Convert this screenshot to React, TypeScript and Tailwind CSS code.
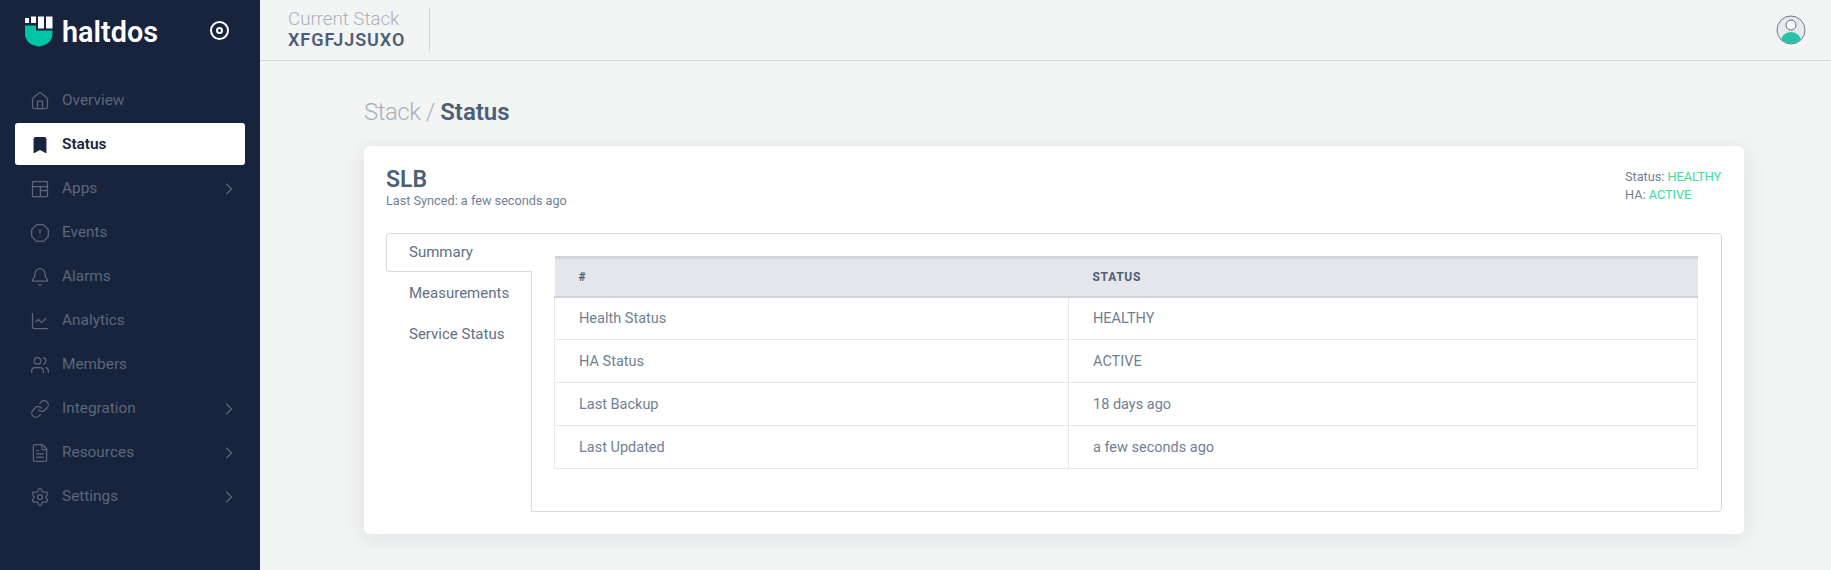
import React from "react";
import { House, Bookmark, OctagonAlert, Bell, ChartLine, Users, Link, FileText, Settings, ChevronRight } from "lucide-react";

function LayoutIcon({ size = 20, strokeWidth = 1.5, className = "" }: { size?: number; strokeWidth?: number; className?: string; fill?: string }) {
  return (
    <svg width={size} height={size} viewBox="0 0 24 24" fill="none" stroke="currentColor" strokeWidth={strokeWidth} className={className}>
      <rect x="3" y="3" width="18" height="18" rx="1" />
      <path d="M3 9h18M12.5 9v12M12.5 14H21" />
    </svg>
  );
}

const nav = [
  { label: "Overview", Icon: House },
  { label: "Status", Icon: Bookmark, active: true },
  { label: "Apps", Icon: LayoutIcon, more: true },
  { label: "Events", Icon: OctagonAlert },
  { label: "Alarms", Icon: Bell },
  { label: "Analytics", Icon: ChartLine },
  { label: "Members", Icon: Users },
  { label: "Integration", Icon: Link, more: true },
  { label: "Resources", Icon: FileText, more: true },
  { label: "Settings", Icon: Settings, more: true },
];

const rows = [
  ["Health Status", "HEALTHY"],
  ["HA Status", "ACTIVE"],
  ["Last Backup", "18 days ago"],
  ["Last Updated", "a few seconds ago"],
];

function Logo() {
  return (
    <svg width="30" height="31" viewBox="0 0 30 31" className="mt-[2px]">
      <rect x="0" y="2" width="4" height="5" fill="#fff" />
      <rect x="6" y="0.5" width="5" height="6.5" fill="#fff" />
      <rect x="13" y="0.5" width="6" height="12" fill="#fff" />
      <rect x="21" y="0.5" width="6.5" height="12" fill="#fff" />
      <path d="M0 9.5h11v5h16.5v3.5C27.5 25 21 30 13.8 30.5 6.5 30 0 25 0 18z" fill="#00c4a7" />
    </svg>
  );
}

function Avatar() {
  return (
    <svg width="30" height="30" viewBox="0 0 30 30">
      <defs>
        <clipPath id="avatar-clip"><circle cx="15" cy="15" r="13.5" /></clipPath>
      </defs>
      <circle cx="15" cy="15" r="14" fill="#e6e9ed" stroke="#6f7a8e" strokeWidth="1" />
      <g clipPath="url(#avatar-clip)">
        <ellipse cx="15" cy="27.5" rx="10.5" ry="10.5" fill="#27c2a6" />
      </g>
      <circle cx="15" cy="10" r="5" fill="#fff" stroke="#5d6a80" strokeWidth="1" />
    </svg>
  );
}

export default function App() {
  return (
    <div className="flex h-[570px] w-full overflow-hidden bg-[#f3f4f4] font-['Roboto',sans-serif]">
      <aside className="w-[260px] shrink-0 bg-[#18233d]">
        <div className="flex h-[60px] items-center pl-[25px] pr-[31px]">
          <Logo />
          <span className="ml-[7px] mt-[4px] text-[28.8px] font-semibold leading-none text-white">haltdos</span>
          <span className="ml-auto flex h-[19px] w-[19px] items-center justify-center rounded-full border-2 border-white">
            <span className="h-[7px] w-[7px] rounded-full border-2 border-white" />
          </span>
        </div>
        <nav className="mt-[19px] flex flex-col gap-[2px] pl-[15px] pr-[15px]">
          {nav.map(({ label, Icon, active, more }) => (
            <div
              key={label}
              className={`flex h-[42px] items-center rounded-[3px] pl-[15px] pr-[6px] pt-[2px] ${active ? "bg-white text-[#18233d]" : "text-[#5c677b]"}`}
            >
              <Icon size={20} strokeWidth={1.5} fill={active ? "#18233d" : "none"} className="shrink-0" />
              <span className={`ml-[12px] text-[15.4px] ${active ? "font-semibold" : "font-normal"}`}>{label}</span>
              {more && <ChevronRight size={20} strokeWidth={1.4} className="ml-auto" />}
            </div>
          ))}
        </nav>
      </aside>
      <main className="flex min-w-0 flex-1 flex-col">
        <header className="flex h-[61px] shrink-0 items-center border-b border-[#d4d6dc] pl-[28px] pr-[25px]">
          <div className="flex h-[44px] flex-col justify-center border-r border-[#d4d6dc] pb-[1px] pr-[24px]">
            <span className="text-[18.7px] font-light leading-[20px] text-[#aab0ba]">Current Stack</span>
            <span className="text-[18px] font-semibold leading-[22px] tracking-[0.95px] text-[#4d5e78]">XFGFJJSUXO</span>
          </div>
          <div className="ml-auto"><Avatar /></div>
        </header>
        <div className="pl-[104px] pr-[87px]">
          <h1 className="mt-[36px] h-[49px] text-[24px] font-light leading-[30px] text-[#aab0ba]">
            <span className="tracking-[-0.5px]">Stack / </span><span className="font-semibold text-[#4d5e78]">Status</span>
          </h1>
          <section className="h-[388px] rounded-[6px] bg-white px-[22px] pt-[21px] shadow-[0_4px_24px_rgba(40,50,70,0.1)]">
            <div className="flex h-[66px] items-start justify-between">
              <div>
                <div className="text-[23px] font-semibold leading-[26px] text-[#4d5e78]">SLB</div>
                <div className="text-[12.7px] leading-[16px] text-[#6f7f94]">Last Synced: a few seconds ago</div>
              </div>
              <div className="w-[97px] pt-[1px] text-[12.7px] leading-[18px] text-[#6f7f94]">
                <div className="whitespace-nowrap">Status: <span className="text-[#34e095]">HEALTHY</span></div>
                <div>HA: <span className="text-[#34e095]">ACTIVE</span></div>
              </div>
            </div>
            <div className="flex h-[279px] items-start">
              <div className="relative z-10 -mr-px w-[146px] shrink-0 text-[15px] text-[#5f6f87]">
                <div className="flex h-[39px] items-center rounded-l-[4px] border border-r-0 border-[#d7d9dd] bg-white pl-[22px]">Summary</div>
                <div className="mt-px flex h-[41px] items-center pl-[23px]">Measurements</div>
                <div className="flex h-[41px] items-center pl-[23px]">Service Status</div>
              </div>
              <div className="h-[279px] flex-1 rounded-r-[4px] border border-[#d7d9dd] pl-[22px] pr-[23px] pt-[22px]">
                <table className="w-full border-collapse text-[14.5px] text-[#6f7f94]">
                  <thead>
                    <tr className="h-[39px] border-t-[3px] border-b-2 border-[#d0d3d9] bg-[#e3e6eb] text-left text-[12px] font-bold tracking-[0.06em] text-[#4d5e78]">
                      <th className="w-[514px] pl-[24px] pb-[1px] font-bold">#</th>
                      <th className="pl-[24px] pb-[1px] font-bold">STATUS</th>
                    </tr>
                  </thead>
                  <tbody>
                    {rows.map(([a, b]) => (
                      <tr key={a} className="h-[43px] border border-[#e6e8ec]">
                        <td className="border-r border-[#e6e8ec] pl-[24px] pt-[1px]">{a}</td>
                        <td className="pl-[24px] pt-[1px]">{b}</td>
                      </tr>
                    ))}
                  </tbody>
                </table>
              </div>
            </div>
          </section>
        </div>
      </main>
    </div>
  );
}
